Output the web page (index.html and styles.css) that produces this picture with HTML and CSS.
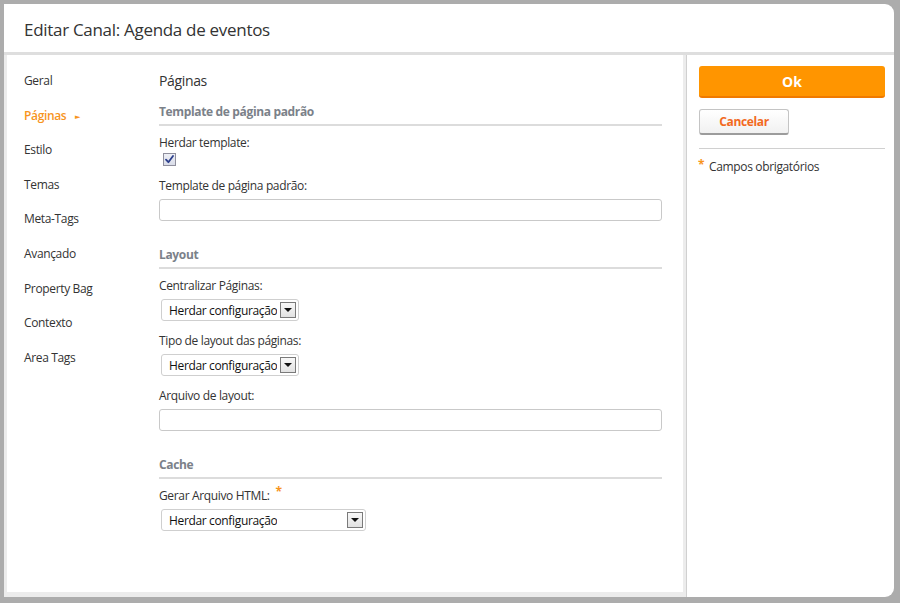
FILE: index.html
```html
<!DOCTYPE html>
<html lang="pt">
<head>
<meta charset="utf-8">
<title>Editar Canal</title>
<link rel="stylesheet" href="styles.css">
</head>
<body>
<div class="dialog">
  <header class="header">
    <h1 class="title">Editar Canal: Agenda de eventos</h1>
  </header>
  <div class="body">
    <div class="left">
      <nav class="nav">
        <a class="nav-item">Geral</a>
        <a class="nav-item active">Páginas <span class="caret">&#9658;</span></a>
        <a class="nav-item">Estilo</a>
        <a class="nav-item">Temas</a>
        <a class="nav-item">Meta-Tags</a>
        <a class="nav-item">Avançado</a>
        <a class="nav-item">Property Bag</a>
        <a class="nav-item">Contexto</a>
        <a class="nav-item">Area Tags</a>
      </nav>
      <main class="main">
        <h2 class="page-title">Páginas</h2>

        <section class="section">
          <h3 class="section-title">Template de página padrão</h3>
          <div class="field">
            <label class="label">Herdar template:</label>
            <span class="checkbox">
              <svg width="9" height="9" viewBox="0 0 9 9"><path d="M1 4.6 L3.4 7.2 L8 1" fill="none" stroke="#2c3f8c" stroke-width="1.8" stroke-linecap="round" stroke-linejoin="round"/></svg>
            </span>
          </div>
          <div class="field">
            <label class="label">Template de página padrão:</label>
            <div class="input"></div>
          </div>
        </section>

        <section class="section">
          <h3 class="section-title">Layout</h3>
          <div class="field">
            <label class="label">Centralizar Páginas:</label>
            <div class="select sm"><span class="select-text">Herdar configuração</span><span class="arrow"></span></div>
          </div>
          <div class="field">
            <label class="label">Tipo de layout das páginas:</label>
            <div class="select sm"><span class="select-text">Herdar configuração</span><span class="arrow"></span></div>
          </div>
          <div class="field">
            <label class="label">Arquivo de layout:</label>
            <div class="input"></div>
          </div>
        </section>

        <section class="section">
          <h3 class="section-title">Cache</h3>
          <div class="field">
            <label class="label">Gerar Arquivo HTML: <span class="req">*</span></label>
            <div class="select lg"><span class="select-text">Herdar configuração</span><span class="arrow"></span></div>
          </div>
        </section>
      </main>
    </div>
    <aside class="right">
      <button class="btn-ok">Ok</button>
      <button class="btn-cancel">Cancelar</button>
      <div class="divider"></div>
      <p class="required-note"><span class="req-dot">*</span>Campos obrigatórios</p>
    </aside>
  </div>
</div>
</body>
</html>
```

FILE: styles.css
```css
* { box-sizing: border-box; }

html, body {
  margin: 0;
  padding: 0;
}

body {
  width: 900px;
  height: 603px;
  background: #acacac;
  font-family: "Open Sans", "Noto Sans", "DejaVu Sans", sans-serif;
  color: #333;
  overflow: hidden;
  padding: 4px 6px 6px 4px;
  letter-spacing: -0.35px;
}

.dialog {
  width: 890px;
  height: 593px;
  background: #fff;
  border-radius: 0 9px 9px 0;
  display: flex;
  flex-direction: column;
  overflow: hidden;
}

.header {
  height: 51px;
  border-bottom: 3px solid #dedede;
  padding-left: 20px;
  display: flex;
  align-items: center;
  flex: none;
}

.title {
  margin: 0;
  font-size: 17px;
  font-weight: 400;
  color: #333;
  letter-spacing: -0.3px;
  padding-top: 2px;
}

.body {
  flex: 1;
  display: flex;
}

.left {
  width: 682px;
  display: flex;
  border-left: 3px solid #ececec;
  border-right: 3px solid #ececec;
  border-bottom: 5px solid #ececec;
}

.nav {
  width: 152px;
  padding: 9px 0 0 17px;
  display: flex;
  flex-direction: column;
  flex: none;
}

.nav-item {
  height: 34.6px;
  line-height: 34.6px;
  font-size: 12px;
  color: #333;
  white-space: nowrap;
}

.nav-item.active {
  color: #f7941d;
  font-weight: 600;
}

.caret {
  font-size: 7px;
  margin-left: 6px;
  vertical-align: 1px;
}

.main {
  width: 503px;
  padding-top: 16px;
}

.page-title {
  margin: 0;
  font-size: 14px;
  font-weight: 400;
  line-height: 20px;
  color: #333;
}

.section {
  margin-top: 26px;
}

.section:first-of-type {
  margin-top: 13px;
}

.section-title {
  margin: 0 0 9px 0;
  font-size: 12px;
  font-weight: 700;
  line-height: 16px;
  color: #7b8189;
  padding-bottom: 4px;
  border-bottom: 2px solid #dcdcdc;
}

.field {
  margin-bottom: 12px;
}

.label {
  display: block;
  height: 16px;
  font-size: 12px;
  line-height: 16px;
  color: #333;
  margin-bottom: 5px;
}

.req {
  color: #f7941d;
  font-weight: 700;
  font-size: 12px;
  position: relative;
  top: -4px;
  margin-left: 3px;
}

.checkbox {
  display: flex;
  align-items: center;
  justify-content: center;
  width: 13px;
  height: 13px;
  margin: -3px 0 0 4px;
  border: 1px solid #8f8f9d;
  background: linear-gradient(#eef0f6, #d9dce8);
}

.input {
  width: 503px;
  height: 22px;
  border: 1px solid #c9c9c9;
  border-radius: 3px;
  background: #fff;
}

.select {
  margin-left: 2px;
  height: 22px;
  border: 1px solid #cfcfcf;
  border-radius: 3px;
  background: #fff;
  display: flex;
  align-items: center;
  justify-content: space-between;
  padding: 0 2px 0 7px;
  font-size: 12px;
  color: #111;
  white-space: nowrap;
}

.select-text {
  overflow: hidden;
}

.select.sm { width: 138px; }
.select.lg { width: 205px; }

.arrow {
  width: 16px;
  height: 16px;
  border: 1px solid #7a7a7a;
  background: linear-gradient(#f8f8f8, #e2e2e2);
  position: relative;
  flex: none;
}

.arrow::after {
  content: "";
  position: absolute;
  left: 3px;
  top: 5px;
  border-left: 4px solid transparent;
  border-right: 4px solid transparent;
  border-top: 4px solid #111;
}

.right {
  flex: 1;
  border-left: 1px solid #d0d0d0;
  padding: 11px 0 0 12px;
  display: flex;
  flex-direction: column;
  align-items: flex-start;
}

.btn-ok {
  width: 186px;
  height: 32px;
  background: #ff9500;
  border: none;
  border-bottom: 2px solid #f07a00;
  border-radius: 3px;
  color: #fff;
  font-family: inherit;
  font-size: 14px;
  font-weight: 700;
  padding: 0;
  cursor: pointer;
}

.btn-cancel {
  margin-top: 11px;
  width: 90px;
  height: 26px;
  background: linear-gradient(#ffffff, #f1f1f1);
  border: 1px solid #c4c4c4;
  border-bottom: 2px solid #9c9c9c;
  border-radius: 3px;
  color: #f26a1f;
  font-family: inherit;
  font-size: 12px;
  font-weight: 700;
  letter-spacing: -0.35px;
  padding: 0;
}

.divider {
  margin-top: 13px;
  width: 186px;
  height: 1px;
  background: #d0d0d0;
}

.required-note {
  margin: 10px 0 0 0;
  font-size: 12px;
  line-height: 16px;
  color: #333;
  display: flex;
  align-items: center;
}

.req-dot {
  color: #f7941d;
  font-weight: 700;
  width: 11px;
  margin-left: -1px;
  position: relative;
  top: -2px;
}
```
